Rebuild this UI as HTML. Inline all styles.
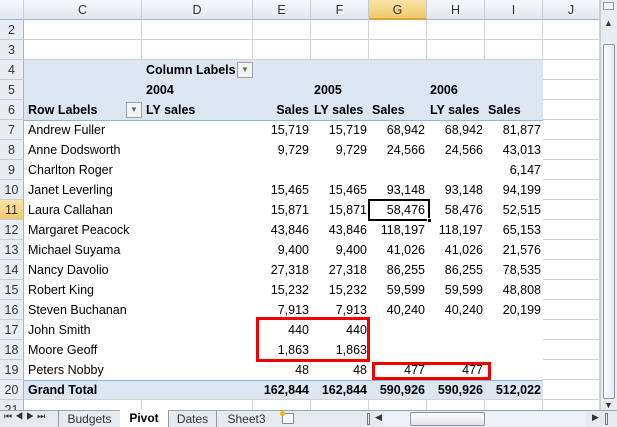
<!DOCTYPE html>
<html><head><style>
*{margin:0;padding:0;box-sizing:border-box}
body{width:617px;height:427px;overflow:hidden;background:#fff;font-family:"Liberation Sans",Arial,sans-serif;font-size:12.5px;color:#000;position:relative}
.a{position:absolute}
.t{position:absolute;height:20px;line-height:20px;white-space:nowrap}
.r{text-align:right}
.b{font-weight:bold}
.hl{position:absolute;height:1px;background:#d4d4d4}
.vl{position:absolute;width:1px;background:#d4d4d4}
.rh{position:absolute;left:0;width:24px;height:20px;line-height:20px;text-align:center;color:#333;background:#e9edf3;border-bottom:1px solid #c5ccd6;border-right:1px solid #9eb6ce;font-size:12.5px}
.ch{position:absolute;top:0;height:20px;line-height:20px;text-align:center;color:#333;background:linear-gradient(#f6f8fb,#e2e7ee);border-right:1px solid #c5ccd6;border-bottom:1px solid #9eb6ce}
</style></head><body>
<div id="g"></div>
<script>
var cols=[24,142,253,311,369,427,485,543,600],L="CDEFGHIJ",h="";
h+='<div class="ch" style="left:0;width:24px"></div>';
for(var i=0;i<8;i++){var bg=i==4?'background:linear-gradient(#f9e3a8,#f1c96a);border-bottom:2px solid #e0a33a;':'';h+='<div class="ch" style="left:'+cols[i]+'px;width:'+(cols[i+1]-cols[i])+'px;'+bg+'">'+L[i]+'</div>';}
for(var r=2;r<=21;r++){var y=20+(r-2)*20;var bg=r==11?'background:linear-gradient(#f9e3a8,#f1c96a);':'';h+='<div class="rh" style="top:'+y+'px;'+bg+'">'+r+'</div>';
h+='<div class="hl" style="left:24px;width:576px;top:'+(y+19)+'px"></div>';}
for(var i=1;i<9;i++)h+='<div class="vl" style="left:'+(cols[i]-1)+'px;top:20px;height:390px"></div>';
// pivot area
h+='<div class="a" style="left:24px;top:60px;width:519px;height:60px;background:#dce6f1"></div>';
h+='<div class="a" style="left:24px;top:120px;width:519px;height:260px;background:#fff;border-top:1px solid #95b3d7"></div>';
h+='<div class="a" style="left:24px;top:380px;width:519px;height:20px;background:#dce6f1;border-top:1px solid #95b3d7"></div>';
h+='<div class="hl" style="left:24px;width:576px;top:399px"></div>';
document.getElementById('g').innerHTML=h;
</script>
<div class="t b" style="left:146px;top:60px">Column Labels</div>
<div class="a" style="left:237px;top:62px;width:16px;height:16px;border:1px solid #a0a0a0;background:#f4f4f4;font-size:8px;line-height:14px;text-align:center;color:#666">▼</div>
<div class="t b" style="left:146px;top:80px">2004</div>
<div class="t b" style="left:314px;top:80px">2005</div>
<div class="t b" style="left:430px;top:80px">2006</div>
<div class="t b" style="left:28px;top:100px">Row Labels</div>
<div class="a" style="left:126px;top:102px;width:16px;height:16px;border:1px solid #a0a0a0;background:#f4f4f4;font-size:8px;line-height:14px;text-align:center;color:#666">▼</div>
<div class="t b" style="left:146px;top:100px">LY sales</div>
<div class="t b r" style="left:253px;width:56px;top:100px">Sales</div>
<div class="t b" style="left:314px;top:100px">LY sales</div>
<div class="t b" style="left:372px;top:100px">Sales</div>
<div class="t b" style="left:430px;top:100px">LY sales</div>
<div class="t b" style="left:488px;top:100px">Sales</div>
<div id="d"></div>
<script>
var rows=[["Andrew Fuller","15,719","15,719","68,942","68,942","81,877"],
["Anne Dodsworth","9,729","9,729","24,566","24,566","43,013"],
["Charlton Roger","","","","","6,147"],
["Janet Leverling","15,465","15,465","93,148","93,148","94,199"],
["Laura Callahan","15,871","15,871","58,476","58,476","52,515"],
["Margaret Peacock","43,846","43,846","118,197","118,197","65,153"],
["Michael Suyama","9,400","9,400","41,026","41,026","21,576"],
["Nancy Davolio","27,318","27,318","86,255","86,255","78,535"],
["Robert King","15,232","15,232","59,599","59,599","48,808"],
["Steven Buchanan","7,913","7,913","40,240","40,240","20,199"],
["John Smith","440","440","","",""],
["Moore Geoff","1,863","1,863","","",""],
["Peters Nobby","48","48","477","477",""],
["Grand Total","162,844","162,844","590,926","590,926","512,022"]];
var cs=[253,311,369,427,485],h="";
rows.forEach(function(r,i){var y=120+i*20,b=i==13?' b':'';
h+='<div class="t'+b+'" style="left:28px;top:'+y+'px">'+r[0]+'</div>';
for(var j=0;j<5;j++)h+='<div class="t r'+b+'" style="left:'+cs[j]+'px;width:'+(j==0?56:56)+'px;top:'+y+'px">'+r[j+1]+'</div>';});
document.getElementById('d').innerHTML=h;
</script>
<div class="a" style="left:368px;top:199px;width:62px;height:22px;border:2px solid #000"></div>
<div class="a" style="left:427px;top:218px;width:5px;height:5px;background:#000;border:1px solid #fff"></div>
<div class="a" style="left:256px;top:317px;width:114px;height:45px;border:3px solid #e00"></div>
<div class="a" style="left:372px;top:362px;width:119px;height:18px;border:3px solid #e00"></div>
<!-- scrollbar -->
<div class="a" style="left:600px;top:0;width:17px;height:410px;background:#e8ecf1;border-left:1px solid #c8ced6"></div>
<div class="a" style="left:603px;top:2px;width:11px;height:8px;border:1px solid #999;background:#f4f4f4"></div>
<div class="a" style="left:604px;top:18px;font-size:9px;color:#333">▲</div>
<div class="a" style="left:603px;top:44px;width:12px;height:355px;border:1px solid #8d96a3;border-radius:2px;background:linear-gradient(90deg,#fdfdfd,#e4e8ee)"></div>
<div class="a" style="left:604px;top:400px;font-size:9px;color:#333">▼</div>
<!-- tabs -->
<div class="a" style="left:0;top:410px;width:617px;height:17px;background:#e5eaf1;border-top:1px solid #9aa6b5"></div>
<div class="a" style="left:4px;top:411px;font-size:9px;color:#333;letter-spacing:3px">⏮◀▶⏭</div>
<div class="a" style="left:58px;top:411px;width:62px;height:16px;border-left:1px solid #999;font-size:12px;line-height:16px;text-align:center;color:#333">Budgets</div>
<div class="a" style="left:120px;top:410px;width:48px;height:17px;background:#fff;font-weight:bold;font-size:12px;line-height:16px;text-align:center">Pivot</div>
<div class="a" style="left:168px;top:411px;width:48px;height:16px;font-size:12px;line-height:16px;text-align:center;color:#333;border-left:1px solid #999">Dates</div>
<div class="a" style="left:216px;top:411px;width:60px;height:16px;font-size:12px;line-height:16px;text-align:center;color:#333;border-left:1px solid #999">Sheet3</div>
<div class="a" style="left:282px;top:413px;width:12px;height:11px;border:1px solid #7a8aa0;background:#fff"></div>
<div class="a" style="left:280px;top:411px;width:5px;height:5px;background:#f2b800;border-radius:50%"></div>
<div class="a" style="left:367px;top:413px;width:3px;height:12px;border:1px solid #777"></div>
<div class="a" style="left:375px;top:412px;font-size:9px;color:#333">◀</div>
<div class="a" style="left:384px;top:412px;width:202px;height:14px;background:#eef1f5"></div>
<div class="a" style="left:410px;top:412px;width:75px;height:14px;border:1px solid #8d96a3;border-radius:2px;background:linear-gradient(#fdfdfd,#dfe4ea)"></div>
<div class="a" style="left:592px;top:412px;font-size:9px;color:#333">▶</div>
<div class="a" style="left:605px;top:413px;width:3px;height:12px;border:1px solid #777"></div>
</body></html>
